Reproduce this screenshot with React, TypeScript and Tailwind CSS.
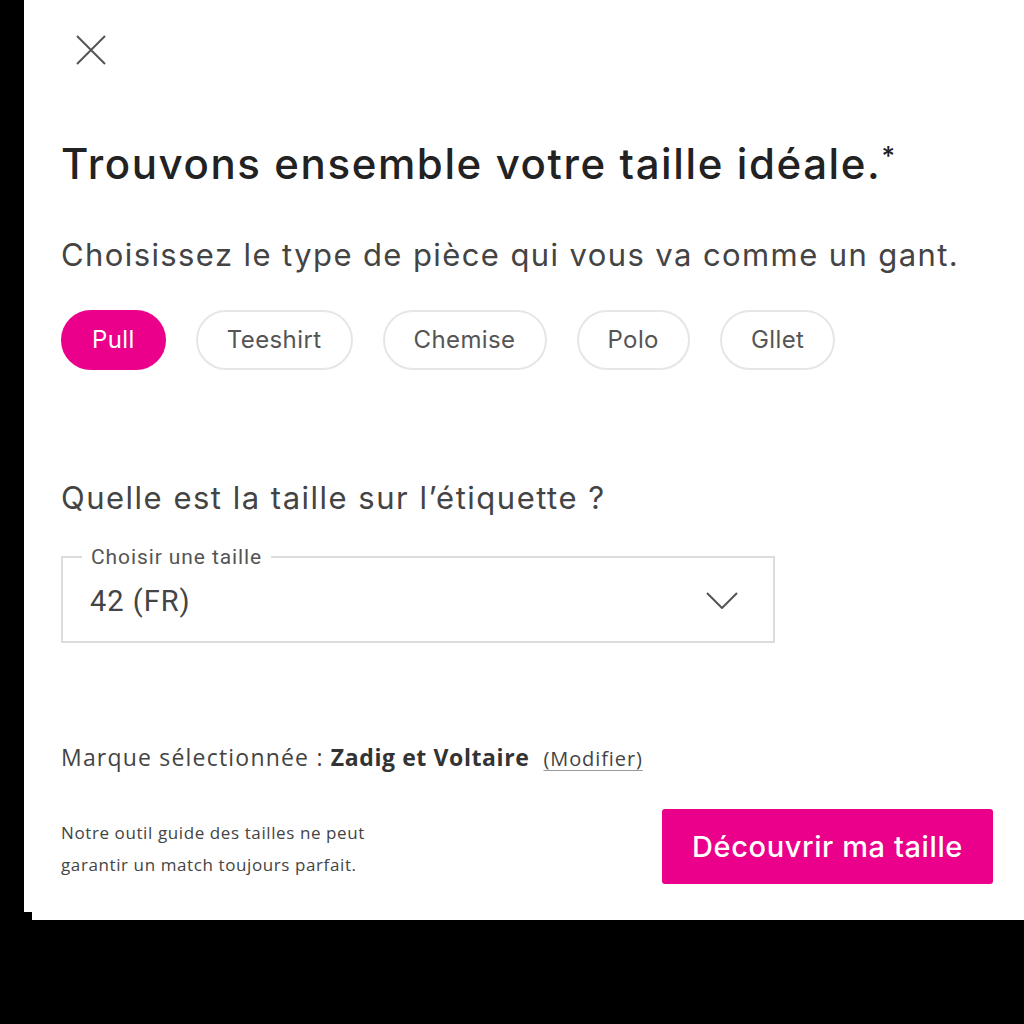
import React from "react";

const pieces = ["Pull", "Teeshirt", "Chemise", "Polo", "Gllet"];

const geo = { fontFamily: "Inter, 'Noto Sans', sans-serif" };
const human = { fontFamily: "'Open Sans', Lato, sans-serif" };
const roboto = { fontFamily: "Roboto, 'Noto Sans', sans-serif" };

const SizeFinder = () => {
  const selected = "Pull";

  return (
    <div className="w-full h-[1024px] bg-black">
      <div className="ml-[24px] w-[1000px]">
        <div className="h-[912px] bg-white pl-[37px] pr-[31px] pt-[35px]">
          {/* close */}
          <button className="ml-[15px] block w-[30px] h-[30px]">
            <svg width="30" height="30" viewBox="0 0 30 30" fill="none">
              <path d="M1 1L29 29M29 1L1 29" stroke="#555" strokeWidth="2" />
            </svg>
          </button>

          <h1
            className="mt-[74px] text-[42px] leading-[50px] font-medium text-[#222] tracking-[1.6px]"
            style={geo}
          >
            Trouvons ensemble votre taille idéale.<sup className="text-[26px] top-[-14px]">*</sup>
          </h1>

          <p className="mt-[46px] text-[31px] leading-[40px] text-[#444] tracking-[1.4px]" style={geo}>
            Choisissez le type de pièce qui vous va comme un gant.
          </p>

          <div className="mt-[35px] flex gap-[30px]">
            {pieces.map((p) => (
              <div
                key={p}
                className={
                  p === selected
                    ? "h-[60px] px-[29px] flex items-center rounded-full bg-[#ea008a] text-white text-[24px] tracking-[0.4px] border-2 border-[#ea008a]"
                    : "h-[60px] px-[29px] flex items-center rounded-full bg-white text-[#555] text-[24px] tracking-[0.4px] border-2 border-[#e6e6e6]"
                }
                style={geo}
              >
                {p}
              </div>
            ))}
          </div>

          <p className="mt-[108px] text-[31px] leading-[40px] text-[#444] tracking-[1.5px]" style={geo}>
            Quelle est la taille sur l’étiquette ?
          </p>

          <div className="mt-[38px] relative w-[714px] h-[87px] border-2 border-[#dcdcdc] pl-[27px] pr-[35px] pt-[26px] flex items-start justify-between">
            <span
              className="absolute left-[19px] top-[-13px] bg-white px-[9px] text-[21px] leading-[24px] tracking-[0.9px] text-[#555]"
              style={roboto}
            >
              Choisir une taille
            </span>
            <span className="text-[29px] leading-[34px] tracking-[1px] text-[#444]" style={roboto}>
              42 (FR)
            </span>
            <svg width="32" height="17" viewBox="0 0 32 17" fill="none" className="mt-[8px]">
              <path d="M1 1L16 16L31 1" stroke="#555" strokeWidth="2" />
            </svg>
          </div>

          <p className="mt-[100px] text-[23px] leading-[28px] tracking-[1.2px] text-[#444]" style={human}>
            Marque sélectionnée : <span className="font-bold tracking-[0.6px] text-[#333]">Zadig et Voltaire</span>
            <span className="ml-[14px] text-[20px] tracking-[0.9px] underline decoration-1 underline-offset-4 decoration-[#999]">
              (Modifier)
            </span>
          </p>

          <div className="mt-[36px] flex items-start justify-between">
            <p className="pt-[8px] text-[17px] leading-[32px] tracking-[0.6px] text-[#444]" style={human}>
              Notre outil guide des tailles ne peut
              <br />
              garantir un match toujours parfait.
            </p>
            <button
              className="w-[331px] h-[75px] rounded-[3px] bg-[#ea008a] text-white text-[29px] font-medium tracking-[0.6px]"
              style={geo}
            >
              Découvrir ma taille
            </button>
          </div>
        </div>
        <div className="ml-[8px] h-[8px] bg-white" />
      </div>
    </div>
  );
};

export default function App() {
  return <SizeFinder />;
}
